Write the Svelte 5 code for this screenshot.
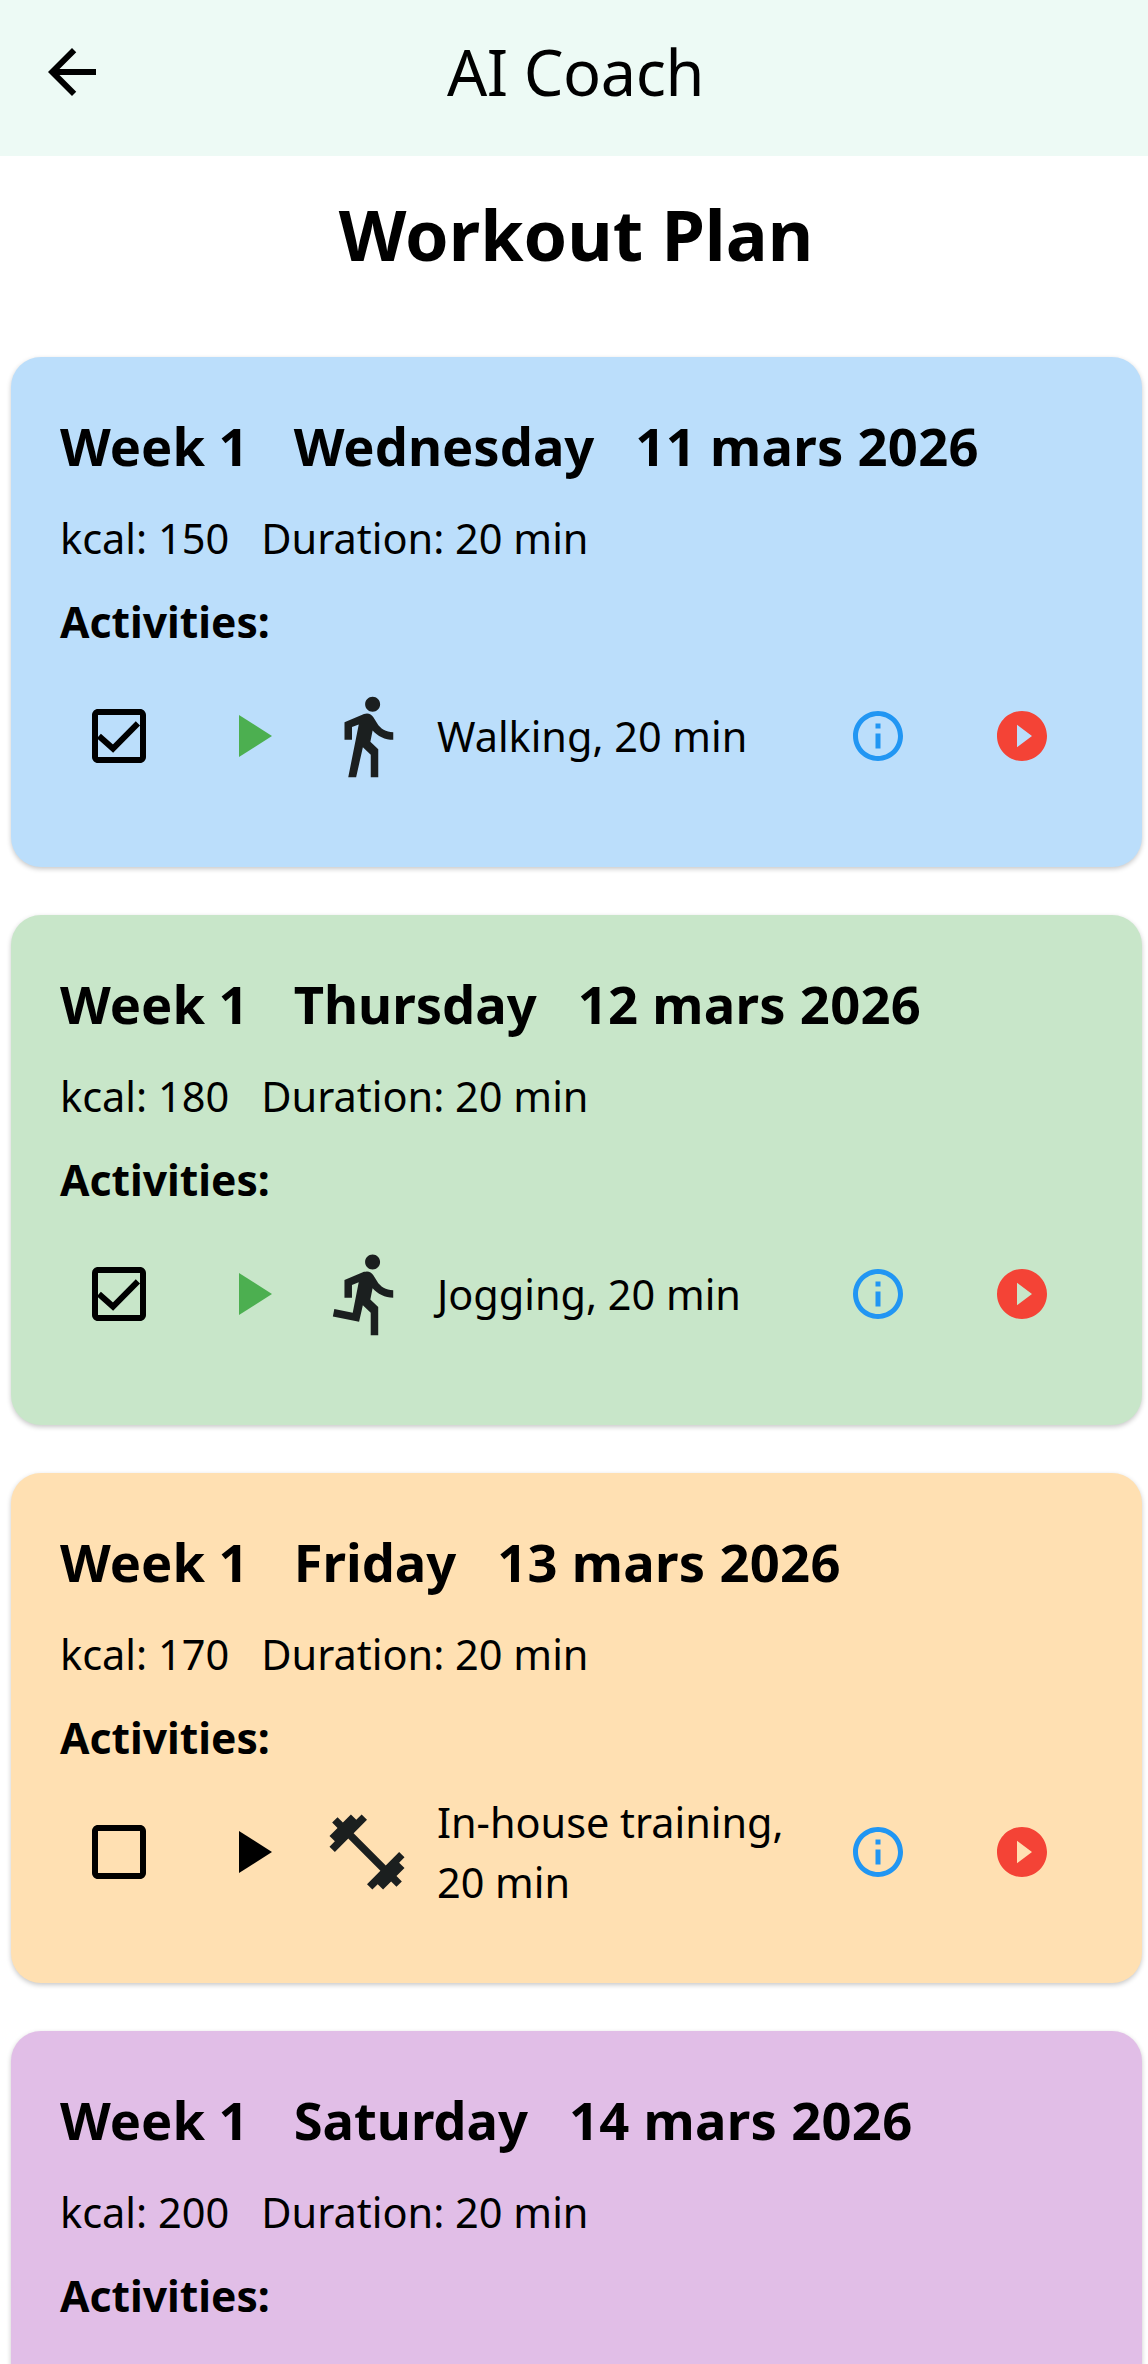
<script>
  const paths = {
    walk: 'M13.5 5.5c1.1 0 2-.9 2-2s-.9-2-2-2-2 .9-2 2 .9 2 2 2zM9.8 8.9L7 23h2.1l1.8-8 2.1 2v6h2v-7.5l-2.1-2 .6-3C14.8 12 16.8 13 19 13v-2c-1.9 0-3.5-1-4.3-2.4l-1-1.6c-.4-.6-1-1-1.7-1-.3 0-.5.1-.8.1L6 8.3V13h2V9.6l1.8-.7',
    run: 'M13.49 5.48c1.1 0 2-.9 2-2s-.9-2-2-2-2 .9-2 2 .9 2 2 2zm-3.6 13.9l1-4.4 2.1 2v6h2v-7.5l-2.1-2 .6-3c1.3 1.5 3.3 2.5 5.5 2.5v-2c-1.9 0-3.5-1-4.3-2.4l-1-1.6c-.4-.6-1-1-1.7-1-.3 0-.5.1-.8.1l-5.2 2.2v4.7h2v-3.4l1.8-.7-1.6 8.1-4.9-1-.4 2 7 1.4z',
    gym: 'M20.57 14.86L22 13.43 20.57 12 17 15.57 8.43 7 12 3.43 10.57 2 9.14 3.43 7.71 2 5.57 4.14 4.14 2.71 2.71 4.14l1.43 1.43L2 7.71l1.43 1.43L2 10.57 3.43 12 7 8.43 15.57 17 12 20.57 13.43 22l1.43-1.43L16.29 22l2.14-2.14 1.43 1.43 1.43-1.43-1.43-1.43L22 16.29z'
  };
  const cards = [
    { day: 'Wednesday', date: '11 mars 2026', kcal: 150, color: '#bbdefb', act: { icon: 'walk', label: 'Walking, 20 min', done: true } },
    { day: 'Thursday', date: '12 mars 2026', kcal: 180, color: '#c8e6c9', act: { icon: 'run', label: 'Jogging, 20 min', done: true } },
    { day: 'Friday', date: '13 mars 2026', kcal: 170, color: '#ffe0b2', act: { icon: 'gym', label: 'In-house training, 20 min', done: false } },
    { day: 'Saturday', date: '14 mars 2026', kcal: 200, color: '#e1bee7', act: null }
  ];
</script>

<div class="screen">
  <header class="bar">
    <svg class="back" viewBox="0 0 24 24" width="72" height="72"><path d="M20 11H7.83l5.59-5.59L12 4l-8 8 8 8 1.41-1.41L7.83 13H20v-2z" /></svg>
    <span class="bar-title">AI Coach</span>
  </header>
  <h1>Workout Plan</h1>
  <div class="list">
    {#each cards as c}
      <section class="card" style="background:{c.color}">
        <h2><span>Week 1</span><span>{c.day}</span><span class="date">{c.date}</span></h2>
        <div class="meta"><span>kcal: {c.kcal}</span><span>Duration: 20 min</span></div>
        <div class="act-title">Activities:</div>
        {#if c.act}
          <div class="row">
            <svg class="check" viewBox="0 0 24 24" width="72" height="72">
              <path d="M19 5v14H5V5h14m0-2H5c-1.1 0-2 .9-2 2v14c0 1.1.9 2 2 2h14c1.1 0 2-.9 2-2V5c0-1.1-.9-2-2-2z" />
              {#if c.act.done}<path class="tick" d="M5.3 12 10 16.2 18.3 7.8" />{/if}
            </svg>
            <svg class="play" class:done={c.act.done} viewBox="0 0 24 24" width="72" height="72"><path d="M8 5v14l11-7z" /></svg>
            <svg class="kind" viewBox="0 0 24 24" width="90" height="90"><path d={paths[c.act.icon]} /></svg>
            <div class="label">{c.act.label}</div>
            <svg class="info" viewBox="0 0 24 24" width="60" height="60"><path d="M11 7h2v2h-2zm0 4h2v6h-2zm1-9C6.48 2 2 6.48 2 12s4.48 10 10 10 10-4.48 10-10S17.52 2 12 2zm0 18c-4.41 0-8-3.59-8-8s3.59-8 8-8 8 3.59 8 8-3.59 8-8 8z" /></svg>
            <svg class="video" viewBox="0 0 24 24" width="60" height="60"><path d="M12 2C6.48 2 2 6.48 2 12s4.48 10 10 10 10-4.48 10-10S17.52 2 12 2zm-2 14.5v-9l6 4.5-6 4.5z" /></svg>
          </div>
        {/if}
      </section>
    {/each}
  </div>
</div>

<style>
  :global(body) { margin: 0; background: #fff; }
  .screen { height: 2364px; overflow: hidden; font-family: "Noto Sans", sans-serif; color: #000; background: #fff; }
  .bar { height: 156px; background: #edfaf5; display: flex; align-items: center; justify-content: center; position: relative; }
  .back { position: absolute; left: 36px; top: 36px; }
  .bar-title { font-size: 63px; line-height: 72px; letter-spacing: -0.4px; padding-bottom: 12px; padding-left: 3px; }
  h1 { margin: 0; height: 201px; font-size: 70px; font-weight: 700; line-height: 78px; text-align: center; padding-top: 39px; padding-left: 4px; box-sizing: border-box; }
  .list { display: flex; flex-direction: column; gap: 48px; padding: 0 6px 0 11px; }
  .card { height: 510px; flex: none; box-sizing: border-box; padding: 61px 0 0 49px; border-radius: 30px; box-shadow: 0 2px 5px rgba(0,0,0,.22); }
  h2 { margin: 0; display: flex; gap: 45px; font-size: 52.5px; font-weight: 700; line-height: 56px; }
  .date { margin-left: -4px; letter-spacing: 0.3px; }
  .meta { display: flex; gap: 32px; margin-top: 40px; font-size: 41.5px; line-height: 48px; }
  .act-title { margin-top: 35px; font-size: 42.6px; font-weight: 700; line-height: 48px; }
  .row { display: flex; align-items: center; height: 90px; margin-top: 46px; padding-left: 23px; }
  svg { flex: none; display: block; }
  .check { fill: #000; }
  .tick { fill: none; stroke: #000; stroke-width: 2; }
  .play { margin-left: 60px; fill: #000; }
  .play.done { fill: #4caf50; }
  .kind { margin-left: 35px; fill: #1b1f1f; }
  .label { width: 388px; margin-left: 25px; flex: none; font-size: 41.4px; line-height: 60px; }
  .info { margin-left: 23px; fill: #2196f3; }
  .video { margin-left: 84px; fill: #f44336; }
</style>
